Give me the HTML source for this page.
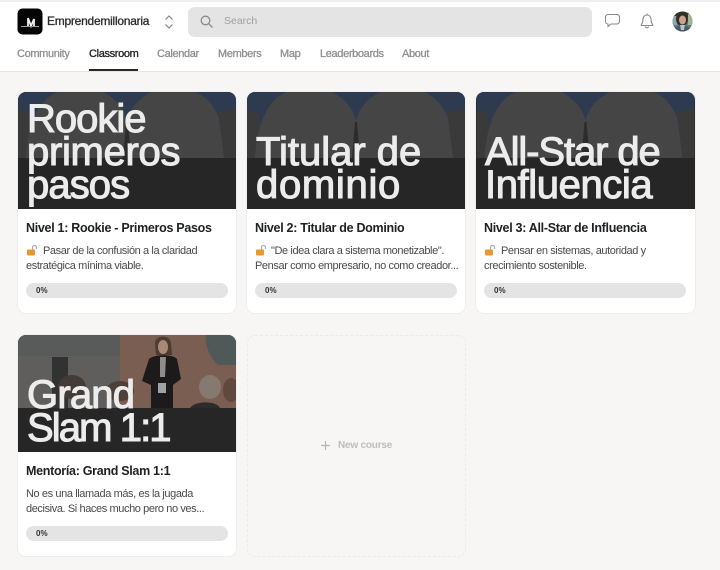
<!DOCTYPE html>
<html><head><meta charset="utf-8">
<style>
*{box-sizing:border-box;margin:0;padding:0}
html,body{width:720px;height:570px;overflow:hidden;background:#f7f6f5;font-family:"Liberation Sans",sans-serif}
#w{position:absolute;left:0;top:0;width:720px;height:570px;filter:blur(.25px)}
.abs{position:absolute;white-space:nowrap}
#top{position:absolute;left:0;top:0;width:720px;height:72px;background:#fff;border-bottom:1px solid #e6e6e6}
#strip{position:absolute;left:0;top:0;width:720px;height:2px;background:#efefef}
.tab{position:absolute;top:47px;font-size:11px;line-height:14px;font-weight:400;color:#8f8f8f;white-space:nowrap;letter-spacing:-.35px;-webkit-text-stroke:.3px #8f8f8f}
.card{position:absolute;width:218px;height:221px;background:#fff;border-radius:8px;overflow:hidden;box-shadow:0 0 0 1px #eeeeee}
.img{position:absolute;left:0;top:0;width:218px;height:117px;background:#262626;overflow:hidden}
.big{position:absolute;left:9px;color:#ececec;font-size:40px;line-height:33px;font-weight:400;-webkit-text-stroke:1.1px #ececec;white-space:nowrap}
.big span{display:block}
.ttl{position:absolute;left:8px;top:128px;font-size:12.5px;line-height:16px;font-weight:700;color:#202124;white-space:nowrap;letter-spacing:-.3px}
.dsc{position:absolute;left:8px;top:151px;font-size:11px;line-height:15px;color:#4a4a4a;white-space:nowrap;letter-spacing:-.4px;padding-top:1px}
.bar{position:absolute;left:8px;top:191px;width:202px;height:15px;background:#e4e4e4;border-radius:8px}
.bar span{position:absolute;left:10px;top:2px;font-size:8px;line-height:11px;font-weight:700;color:#333}
</style></head><body><div id="w">
<div id="top"></div><div id="strip"></div>

<svg class="abs" style="left:17px;top:8px" width="26" height="27" viewBox="0 0 26 27"><rect x="0.5" y="0.5" width="25" height="26" rx="5" fill="#050505"/><path d="M11 10v8M11 10l3 8 3-7v7" stroke="#eee" stroke-width="1.800" fill="none"/><path d="M4 18.500h18" stroke="#999" stroke-width="1"/></svg>
<div class="abs" style="left:47px;top:14px;font-size:12px;line-height:14px;color:#2a2a2a;letter-spacing:-.25px;-webkit-text-stroke:.3px #2a2a2a">Emprendemillonaria</div>
<svg class="abs" style="left:163px;top:14px" width="12" height="16" viewBox="0 0 12 16"><path d="M2.500 5.500L6 2l3.500 3.500M2.500 10.500L6 14l3.500-3.500" stroke="#888" stroke-width="1.200" fill="none"/></svg>

<div class="abs" style="left:188px;top:7px;width:404px;height:30px;background:#e4e4e4;border-radius:7px"></div>
<svg class="abs" style="left:199px;top:14px" width="15" height="15" viewBox="0 0 15 15"><circle cx="6.500" cy="6.500" r="4.300" stroke="#8b8b8b" stroke-width="1.300" fill="none"/><path d="M9.800 9.800L13.500 13.500" stroke="#8b8b8b" stroke-width="1.300"/></svg>
<div class="abs" style="left:224px;top:15px;font-size:10.500px;line-height:13px;color:#9f9f9f">Search</div>

<svg class="abs" style="left:604px;top:13px" width="17" height="16" viewBox="0 0 17 16"><path d="M4 1.500h9a2.500 2.500 0 0 1 2.500 2.500v4.500a2.500 2.500 0 0 1-2.500 2.500H7l-3 2.500v-2.500a2.500 2.500 0 0 1-2.500-2.500V4A2.500 2.500 0 0 1 4 1.500z" stroke="#8a8a8a" stroke-width="1.100" fill="none"/></svg>
<svg class="abs" style="left:640px;top:12px" width="14" height="18" viewBox="0 0 14 18"><path d="M7 1.500v1.500M7 3a4 4 0 0 0-4 4c0 4-1.800 5.500-1.800 6.500h11.600C12.800 12.500 11 11 11 7a4 4 0 0 0-4-4zM5.300 14.500a1.800 1.800 0 0 0 3.400 0" stroke="#8a8a8a" stroke-width="1.100" fill="none"/></svg>
<svg class="abs" style="left:672px;top:11px" width="21" height="21" viewBox="0 0 21 21"><defs><clipPath id="av"><circle cx="10.500" cy="10.500" r="10"/></clipPath></defs><g clip-path="url(#av)"><rect width="21" height="21" fill="#5e7f83"/><rect width="21" height="6" fill="#2c3a35"/><rect x="16" y="3" width="5" height="11" fill="#9fb58d"/><rect x="0" y="5" width="5" height="9" fill="#8aa7b0"/><ellipse cx="10" cy="8" rx="6" ry="7" fill="#3b2c24"/><ellipse cx="10.500" cy="9" rx="3.500" ry="4.500" fill="#c9a38f"/><path d="M3 21v-4c2-3 12-3 15 0v4z" fill="#4c5a68"/><path d="M8 14h5l-1 5h-3z" fill="#b6c2c9"/></g></svg>

<div class="tab" style="left:17px">Community</div>
<div class="tab" style="left:89px;color:#262626;-webkit-text-stroke:.35px #262626">Classroom</div>
<div class="abs" style="left:89px;top:69px;width:49px;height:2px;background:#262626"></div>
<div class="tab" style="left:157px">Calendar</div>
<div class="tab" style="left:218px">Members</div>
<div class="tab" style="left:280px">Map</div>
<div class="tab" style="left:320px">Leaderboards</div>
<div class="tab" style="left:402px">About</div>

<div class="card" style="left:18px;top:92px">
<div class="img">
<svg class="abs" style="left:0;top:0" width="218" height="66" viewBox="0 0 218 66"><rect width="218" height="66" fill="#2e3a50"/><path d="M0 17L12 22V66H0z" fill="#3a3a3a"/><path d="M8 66C10 30 22 6 40 0H85C100 8 108 20 109 30V66z" fill="#454545"/><path d="M209 66C207 30 195 6 177 0H133C118 8 110 20 109 30V66z" fill="#454545"/><path d="M200 20l18-3v49h-12z" fill="#3a3a3a"/><path d="M105 66l3-36h2l3 36z" fill="#2c2c2c"/></svg>
<div class="big" style="top:11px"><span style="letter-spacing:-1px">Rookie</span><span style="letter-spacing:-.3px">primeros</span><span style="letter-spacing:-.9px">pasos</span></div>
</div>
<div class="ttl">Nivel 1: Rookie - Primeros Pasos</div>
<div class="dsc"><svg width="12" height="12" viewBox="0 0 12 12" style="vertical-align:-2px;margin-right:5px"><path d="M6.500 6V3.500a2 2 0 0 1 4 0V5" stroke="#aaa" stroke-width="1.200" fill="none"/><rect x="1" y="5.500" width="8" height="6" rx="1" fill="#e8982e"/></svg>Pasar de la confusión a la claridad<br>estratégica mínima viable.</div>
<div class="bar"><span>0%</span></div>
</div>

<div class="card" style="left:247px;top:92px">
<div class="img">
<svg class="abs" style="left:0;top:0" width="218" height="66" viewBox="0 0 218 66"><rect width="218" height="66" fill="#2e3a50"/><path d="M0 17L12 22V66H0z" fill="#3a3a3a"/><path d="M8 66C10 30 22 6 40 0H85C100 8 108 20 109 30V66z" fill="#454545"/><path d="M209 66C207 30 195 6 177 0H133C118 8 110 20 109 30V66z" fill="#454545"/><path d="M200 20l18-3v49h-12z" fill="#3a3a3a"/><path d="M105 66l3-36h2l3 36z" fill="#2c2c2c"/></svg>
<div class="big" style="top:44px"><span style="letter-spacing:0">Titular de</span><span style="letter-spacing:.7px">dominio</span></div>
</div>
<div class="ttl">Nivel 2: Titular de Dominio</div>
<div class="dsc"><svg width="12" height="12" viewBox="0 0 12 12" style="vertical-align:-2px;margin-right:4px"><path d="M6.500 6V3.500a2 2 0 0 1 4 0V5" stroke="#aaa" stroke-width="1.200" fill="none"/><rect x="1" y="5.500" width="8" height="6" rx="1" fill="#e8982e"/></svg>"De idea clara a sistema monetizable".<br>Pensar como empresario, no como creador...</div>
<div class="bar"><span>0%</span></div>
</div>

<div class="card" style="left:476px;top:92px;width:219px">
<div class="img" style="width:219px">
<svg class="abs" style="left:0;top:0" width="219" height="66" viewBox="0 0 218 66"><rect width="218" height="66" fill="#2e3a50"/><path d="M0 17L12 22V66H0z" fill="#3a3a3a"/><path d="M8 66C10 30 22 6 40 0H85C100 8 108 20 109 30V66z" fill="#454545"/><path d="M209 66C207 30 195 6 177 0H133C118 8 110 20 109 30V66z" fill="#454545"/><path d="M200 20l18-3v49h-12z" fill="#3a3a3a"/><path d="M105 66l3-36h2l3 36z" fill="#2c2c2c"/></svg>
<div class="big" style="top:44px"><span style="letter-spacing:-1.100px">All-Star de</span><span style="letter-spacing:-.4px">Influencia</span></div>
</div>
<div class="ttl">Nivel 3: All-Star de Influencia</div>
<div class="dsc"><svg width="12" height="12" viewBox="0 0 12 12" style="vertical-align:-2px;margin-right:5px"><path d="M6.500 6V3.500a2 2 0 0 1 4 0V5" stroke="#aaa" stroke-width="1.200" fill="none"/><rect x="1" y="5.500" width="8" height="6" rx="1" fill="#e8982e"/></svg>Pensar en sistemas, autoridad y<br>crecimiento sostenible.</div>
<div class="bar"><span>0%</span></div>
</div>

<div class="card" style="left:18px;top:335px">
<div class="img">
<svg class="abs" style="left:0;top:0" width="218" height="73" viewBox="0 0 218 73"><rect width="218" height="73" fill="#5a5654"/><rect width="102" height="21" fill="#595a5a"/><rect x="0" y="21" width="102" height="52" fill="#5f5e5d"/><rect x="34" y="22" width="16" height="51" fill="#333232"/><rect x="102" y="0" width="116" height="73" fill="#7a5e51"/><path d="M188 0h30v30h-18c-8-8-14-20-12-30z" fill="#4f5a58"/><ellipse cx="54" cy="52" rx="14" ry="12" fill="#443b38"/><ellipse cx="102" cy="56" rx="14" ry="10" fill="#4d403b"/><ellipse cx="192" cy="52" rx="11" ry="12" fill="#857970"/><ellipse cx="213" cy="55" rx="8" ry="12" fill="#5f493f"/><path d="M172 73c4-7 26-8 30 0z" fill="#2d2b2c"/><path d="M137 8c0-8 15-9 16 0l1 12h-16z" fill="#4f3c31"/><ellipse cx="145" cy="12" rx="5" ry="7" fill="#a98a77"/><path d="M131 24c5-5 24-5 28 0l4 20-8 6v23h-22V50l-9-4z" fill="#1c1a1b"/><path d="M142 22h6l-1 20h-5z" fill="#8f8c8a"/><rect x="140" y="48" width="8" height="10" fill="#9fa2a7"/></svg>
<div class="big" style="top:44px"><span style="letter-spacing:-.8px">Grand</span><span style="letter-spacing:-1.900px">Slam 1:1</span></div>
</div>
<div class="ttl">Mentoría: Grand Slam 1:1</div>
<div class="dsc">No es una llamada más, es la jugada<br>decisiva. Si haces mucho pero no ves...</div>
<div class="bar"><span>0%</span></div>
</div>

<div class="abs" style="left:247px;top:335px;width:219px;height:222px;border:1px dashed #ecebe9;border-radius:8px"></div>
<svg class="abs" style="left:320px;top:440px" width="11" height="11" viewBox="0 0 11 11"><path d="M5.500 1v9M1 5.500h9" stroke="#b5b5b5" stroke-width="1.200"/></svg>
<div class="abs" style="left:338px;top:439px;font-size:10px;line-height:13px;font-weight:700;color:#bdbdbd;letter-spacing:-.2px">New course</div>
</div></body></html>
